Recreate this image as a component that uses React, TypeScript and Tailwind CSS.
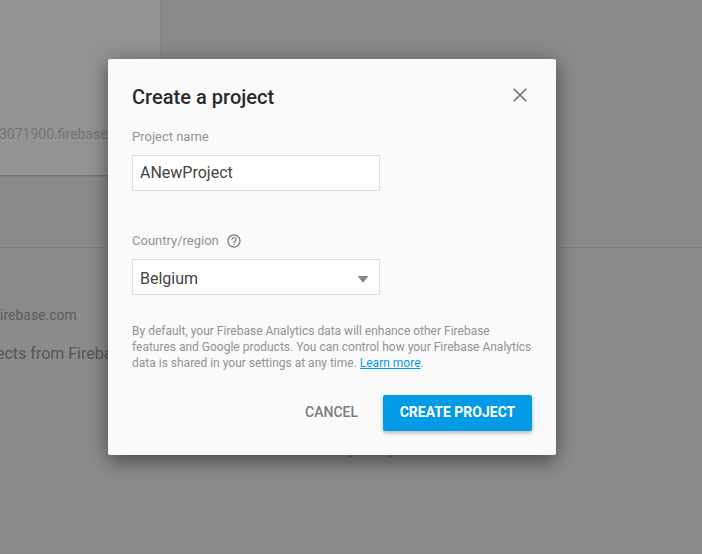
function ProjectsPage() {
  return (
    <div className="flex h-full flex-col border-b border-[#8a8384]">
      <div className="flex h-[176px] w-[161px] items-end whitespace-nowrap border-b border-r border-b-[#727272] border-r-[#828384] bg-[#949494] pb-[32px] text-[14px] leading-[18px] text-[#747474] shadow-[0_1px_1px_rgba(0,0,0,0.08)]">
        <span className="-ml-px">3071900.firebase</span>
      </div>
      <div className="mt-[71px] h-px bg-[#7e7f80]" />
      <div className="mt-[58px] whitespace-nowrap text-[14px] leading-[18px] text-[#5a5b5c]">
        irebase.com
      </div>
      <div className="mt-[19px] -ml-[4px] whitespace-nowrap text-[16px] leading-[22px] text-[#555657]">
        ects from Fireba
      </div>
      <div className="mt-[77px] flex h-[16px] gap-[33px] pl-[349px] text-[13px] leading-[16px] text-[#58595a]">
        <span>y</span>
        <span>y</span>
      </div>
    </div>
  );
}

function CloseIcon() {
  return (
    <svg width="14" height="14" viewBox="0 0 14 14" fill="none" stroke="#6e6e6e" strokeWidth="1.6">
      <path d="M.7.7l12.6 12.6M13.3.7L.7 13.3" />
    </svg>
  );
}

function HelpIcon() {
  return (
    <svg width="16" height="16" viewBox="0 0 24 24" fill="#808080">
      <path d="M11 18h2v-2h-2v2zm1-16C6.48 2 2 6.48 2 12s4.480 10 10 10 10-4.480 10-10S17.520 2 12 2zm0 18c-4.410 0-8-3.590-8-8s3.590-8 8-8 8 3.590 8 8-3.590 8-8 8zm0-14c-2.210 0-4 1.790-4 4h2c0-1.100.9-2 2-2s2 .9 2 2c0 2-3 1.750-3 5h2c0-2.250 3-2.500 3-5 0-2.210-1.790-4-4-4z" />
    </svg>
  );
}

function CreateProjectDialog() {
  return (
    <section
      role="dialog"
      className="absolute left-[108px] top-[59px] flex h-[396px] w-[448px] flex-col rounded-[2px] bg-[#fafafa] px-6 shadow-[0_8px_16px_rgba(0,0,0,0.3),0_0_24px_rgba(0,0,0,0.22)]"
    >
      <header className="flex h-[68px] items-start justify-between pt-[24px]">
        <h1 className="text-[20px] font-medium leading-[28px] tracking-[0.03px] text-[#2b2b2b]">
          Create a project
        </h1>
        <button aria-label="Close" className="mr-[5px] mt-[5px]">
          <CloseIcon />
        </button>
      </header>
      <label className="flex flex-col text-[13px] leading-[20px] text-[#929292]">
        Project name
        <input
          defaultValue="ANewProject"
          className="mt-[8px] h-[36px] w-[248px] border border-[#dedede] bg-white px-[7px] pb-[2px] text-[16px] text-[#444] outline-none"
        />
      </label>
      <div className="mt-[40px] flex h-[20px] items-center gap-[7px] text-[13px] text-[#929292]">
        Country/region
        <HelpIcon />
      </div>
      <button className="mt-[8px] flex h-[36px] w-[248px] items-center justify-between border border-[#dedede] bg-white pl-[7px] pr-[10px] text-[16px] text-[#444]">
        <span className="pt-[4px]">Belgium</span>
        <svg width="12" height="7" viewBox="0 0 12 7" className="mt-[4px]">
          <path d="M.5 0h11L6 6.800z" fill="#858585" />
        </svg>
      </button>
      <p className="mt-[28px] whitespace-nowrap text-[12px] leading-[16px] text-[#929292]">
        By default, your Firebase Analytics data will enhance other Firebase
        <br />
        features and Google products. You can control how your Firebase Analytics
        <br />
        data is shared in your settings at any time.{" "}
        <a className="text-[#039be5] underline">Learn more</a>.
      </p>
      <footer className="mt-[24px] flex justify-end gap-[9px]">
        <button className="h-[36px] px-4 pb-[2px] text-[14px] font-medium text-[#7c7c7c]">CANCEL</button>
        <button className="h-[36px] w-[149px] rounded-[2px] bg-[#039be5] pb-[2px] text-[14px] font-bold text-white shadow-[0_2px_4px_rgba(0,0,0,0.28)]">
          CREATE PROJECT
        </button>
      </footer>
    </section>
  );
}

export default function App() {
  return (
    <main className="relative h-[554px] w-[702px] overflow-hidden bg-[#8a8b8c] font-[Roboto,sans-serif]">
      <ProjectsPage />
      <CreateProjectDialog />
    </main>
  );
}
